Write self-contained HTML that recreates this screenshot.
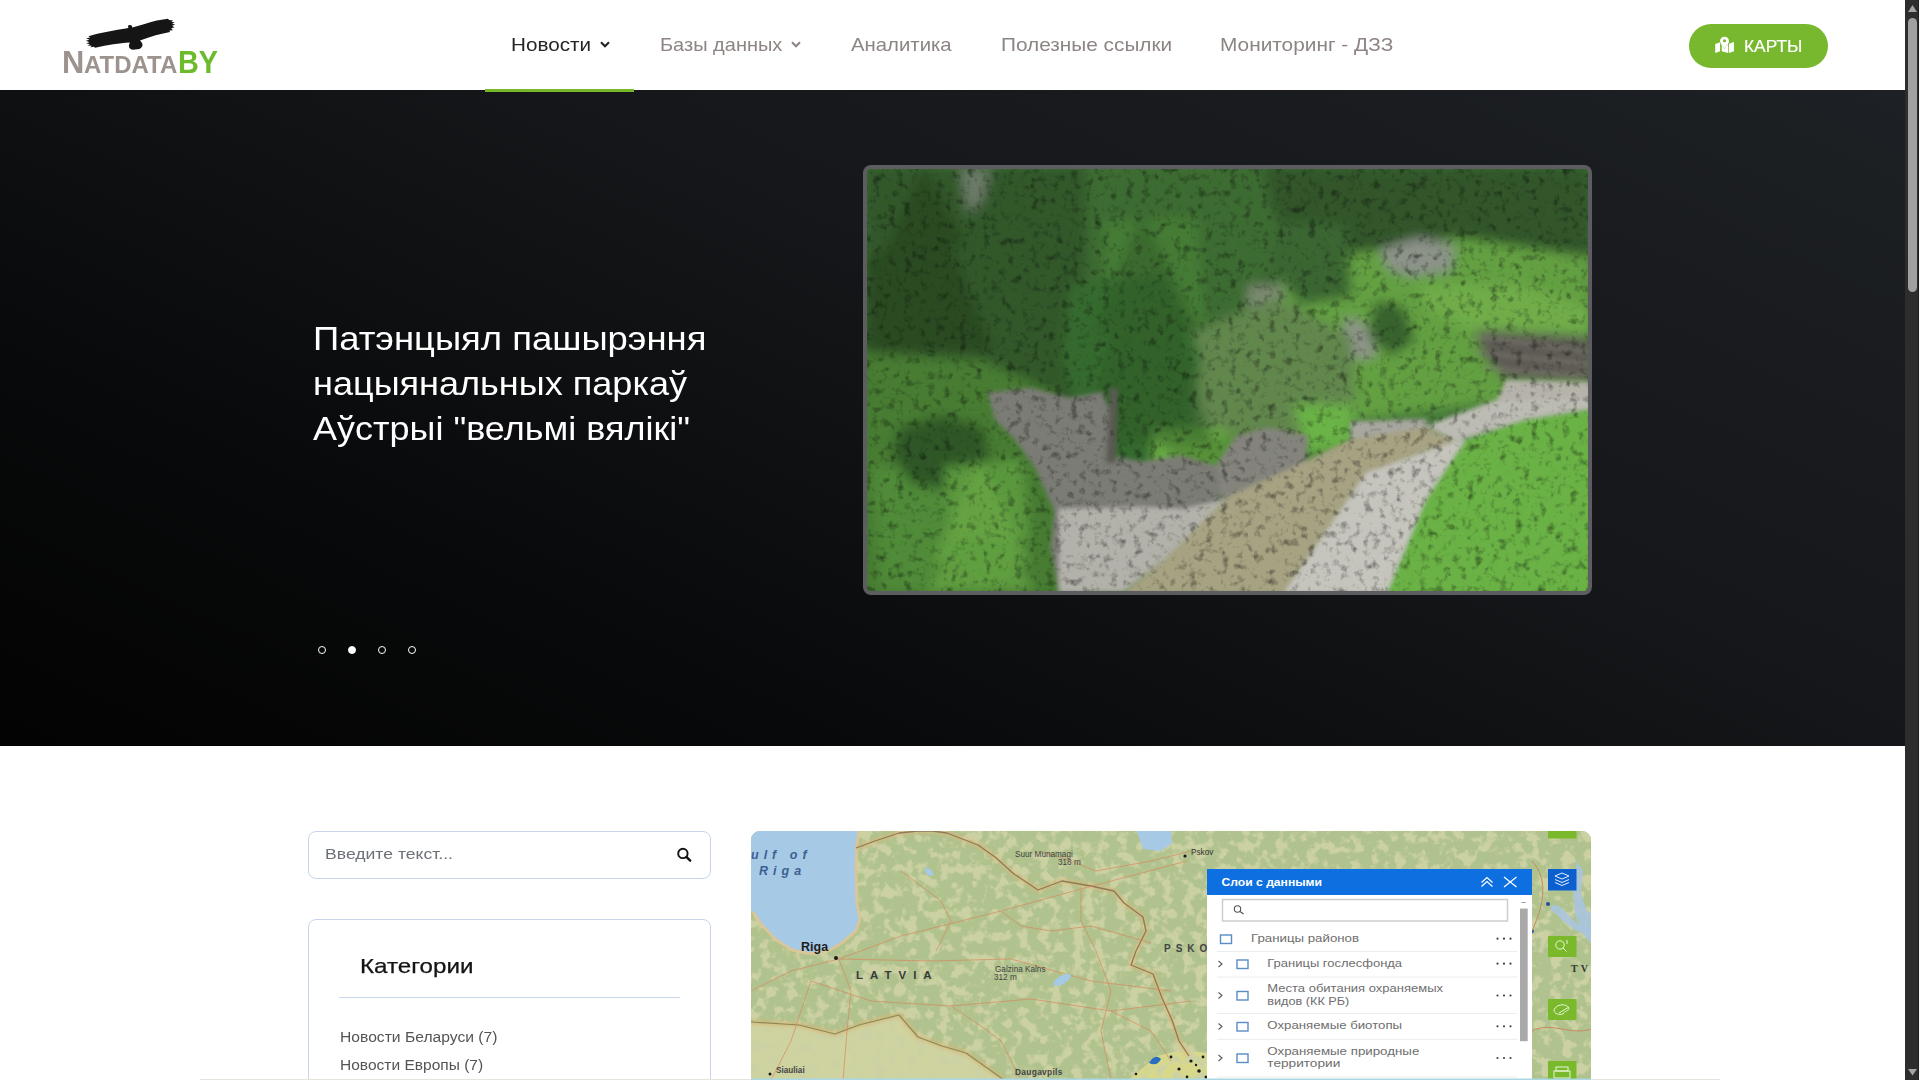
<!DOCTYPE html>
<html><head><meta charset="utf-8">
<style>
*{margin:0;padding:0;box-sizing:border-box}
html,body{width:1920px;height:1080px;overflow:hidden;background:#fff;font-family:"Liberation Sans",sans-serif}
.a{position:absolute}
.t{position:absolute;white-space:nowrap;transform-origin:0 0}
#header{position:absolute;left:0;top:0;width:1905px;height:90px;background:#fff}
.nav{font-size:18.5px;line-height:20px;color:#8d8583}
#hero{position:absolute;left:0;top:90px;width:1905px;height:656px;background:linear-gradient(205deg,#1d2024 0%,#15171a 40%,#08090a 75%,#030303 100%)}
#uline{position:absolute;left:485px;top:89px;width:149px;height:3px;background:#76b82a}
#btn{position:absolute;left:1689px;top:24px;width:139px;height:44px;border-radius:22px;background:#77b82e}
#sb{position:absolute;left:1905px;top:0;width:15px;height:1080px;background:#2d2d2d}
.title{color:#fff;font-size:33.4px;line-height:20px}
.dot{position:absolute;top:645.5px;width:8.5px;height:8.5px;border-radius:50%;border:1.4px solid #fff}
#frame{position:absolute;left:863px;top:165px;width:729px;height:430px;border-radius:8px;background:#5d5d61}
#photo{position:absolute;left:4px;top:4px;width:721px;height:422px;border-radius:4px;overflow:hidden;background:#3d6a2a}
#search{position:absolute;left:308px;top:831px;width:403px;height:48px;border:1px solid #c6d6e8;border-radius:8px}
#cats{position:absolute;left:308px;top:919px;width:403px;height:200px;border:1px solid #c6d6e8;border-radius:8px}
#map{position:absolute;left:751px;top:831px;width:840px;height:249px;border-radius:9px 9px 0 0;overflow:hidden;background:#b6c48e}
</style></head>
<body>
<div id="header">
  <svg class="a" style="left:55px;top:10px" width="170" height="70" viewBox="0 0 1920 791">
    <path fill="#151515" d="M830,200 L822,180 Q845,160 868,178 L872,198 C950,180 1050,140 1150,118 L1275,100 L1290,112 L1335,118 L1312,130 L1352,142 L1322,152 L1357,168 L1322,178 L1348,198 L1312,205 L1332,228 L1292,232 L1300,250 C1200,270 1080,300 960,345 C1000,380 998,422 952,440 L882,448 C838,442 822,410 846,366 C720,376 600,392 452,426 L440,414 L400,422 L414,404 L368,402 L394,388 L352,377 L390,364 L348,347 L390,337 L352,320 L398,310 L378,296 C500,256 680,226 815,205 Z"/>
  </svg>
  <div class="t" id="lgN" style="left:62px;top:45px;font:bold 31.5px/34px 'Liberation Sans',sans-serif;color:#9c928e;transform:scaleX(0.98)">N</div>
  <div class="t" id="lgA" style="left:84px;top:48px;font:bold 24.5px/34px 'Liberation Sans',sans-serif;color:#9c928e;transform:scaleX(0.98)">ATDATA</div>
  <div class="t" id="lgB" style="left:177.5px;top:45px;font:bold 31.5px/34px 'Liberation Sans',sans-serif;color:#6cbb2d;transform:scaleX(0.915)">BY</div>
  <div class="t nav" id="n1" style="left:510.5px;top:35px;transform:scaleX(1.117);color:#252525">Новости</div>
  <svg class="a" style="left:600px;top:41px" width="10" height="7" viewBox="0 0 10 7"><polyline points="1,1.2 5,5.2 9,1.2" fill="none" stroke="#252525" stroke-width="2.1"/></svg>
  <div class="t nav" id="n2" style="left:660px;top:35px;transform:scaleX(1.081)">Базы данных</div>
  <svg class="a" style="left:791px;top:41px" width="10" height="7" viewBox="0 0 10 7"><polyline points="1,1.2 5,5.2 9,1.2" fill="none" stroke="#8d8583" stroke-width="2.1"/></svg>
  <div class="t nav" id="n3" style="left:850.5px;top:35px;transform:scaleX(1.099)">Аналитика</div>
  <div class="t nav" id="n4" style="left:1001px;top:35px;transform:scaleX(1.124)">Полезные ссылки</div>
  <div class="t nav" id="n5" style="left:1220px;top:35px;transform:scaleX(1.126)">Мониторинг - ДЗЗ</div>
  <div id="btn"></div>
  <svg class="a" style="left:1705px;top:30px" width="110" height="32" viewBox="0 0 1920 559">
    <path fill="#fff" d="M178,245 L262,214 L262,372 L178,402 Z M418,240 L505,210 L505,370 L418,402 Z M292,262 L340,330 L388,262 L405,272 L405,402 L292,372 Z"/>
    <path fill="#fff" d="M340,118 C385,118 418,150 418,192 C418,235 370,290 340,322 C310,290 262,235 262,192 C262,150 295,118 340,118 Z"/>
    <circle cx="340" cy="188" r="27" fill="#77b82e"/>
  </svg>
  <div class="t" id="btxt" style="left:1743.5px;top:37.5px;transform:scaleX(1.07);font-size:16.2px;line-height:16px;color:#fff;-webkit-text-stroke:0.2px #fff">КАРТЫ</div>
</div>
<div id="hero"></div>
<div id="uline"></div>
<div class="t title" id="tl1" style="left:313px;top:329px;transform:scaleX(1.091)">Патэнцыял пашырэння</div>
<div class="t title" id="tl2" style="left:313px;top:374px;transform:scaleX(1.080)">нацыянальных паркаў</div>
<div class="t title" id="tl3" style="left:313px;top:419px;transform:scaleX(1.078)">Аўстрыі "вельмі вялікі"</div>
<div class="dot" style="left:317.5px"></div>
<div class="dot" style="left:347.5px;background:#fff"></div>
<div class="dot" style="left:377.5px"></div>
<div class="dot" style="left:407.5px"></div>
<div id="frame"><div id="photo"><svg width="721" height="422" viewBox="7.5 7.5 1818 1065" preserveAspectRatio="none">
<defs>
<filter id="bl" x="-5%" y="-5%" width="110%" height="110%"><feGaussianBlur stdDeviation="14"/></filter>
<filter id="bl2" x="-5%" y="-5%" width="110%" height="110%"><feGaussianBlur stdDeviation="5"/></filter>
<filter id="tex" x="0" y="0" width="100%" height="100%" color-interpolation-filters="sRGB">
<feTurbulence type="fractalNoise" baseFrequency="0.05" numOctaves="4" seed="5" result="n"/>
<feColorMatrix in="n" type="matrix" values="0.33 0.33 0.33 0 0  0.33 0.33 0.33 0 0  0.33 0.33 0.33 0 0  0 0 0 0 1" result="g"/>
<feComponentTransfer in="g" result="m"><feFuncR type="linear" slope="1.9" intercept="0.08"/><feFuncG type="linear" slope="1.9" intercept="0.08"/><feFuncB type="linear" slope="1.9" intercept="0.08"/></feComponentTransfer>
<feBlend in="SourceGraphic" in2="m" mode="multiply"/>
</filter>
<filter id="tex2" x="0" y="0" width="100%" height="100%" color-interpolation-filters="sRGB">
<feTurbulence type="fractalNoise" baseFrequency="0.12" numOctaves="2" seed="9" result="n"/>
<feColorMatrix in="n" type="matrix" values="0.33 0.33 0.33 0 0  0.33 0.33 0.33 0 0  0.33 0.33 0.33 0 0  0 0 0 0 1" result="g"/>
<feComponentTransfer in="g" result="m"><feFuncR type="linear" slope="1.5" intercept="0.25"/><feFuncG type="linear" slope="1.5" intercept="0.25"/><feFuncB type="linear" slope="1.5" intercept="0.25"/></feComponentTransfer>
<feBlend in="SourceGraphic" in2="m" mode="multiply"/>
</filter>
</defs>
<g filter="url(#tex)">
<rect x="0" y="0" width="1833" height="1080" fill="#45783a"/>
<g filter="url(#bl)">
<rect x="0" y="0" width="1833" height="330" fill="#30552a"/>
<path d="M0,0 L560,0 L600,300 L520,600 L300,700 L0,620 Z" fill="#31592a"/>
<path d="M560,0 L1000,0 L1060,200 L960,420 L700,520 L560,420 Z" fill="#3c6c30"/><path d="M600,140 L840,130 L860,400 L620,420 Z" fill="#457c36"/><path d="M240,7 L320,7 L300,90 L260,120 Z" fill="#6a7a66"/>
<path d="M1196,65 L1357,70 L1380,160 L1250,180 L1180,140 Z" fill="#5f9c44"/>
<path d="M1200,260 L1320,240 L1330,340 L1240,380 Z" fill="#6cae48"/>
<path d="M1000,0 L1833,0 L1833,180 L1500,200 L1100,170 Z" fill="#32572a"/>
<path d="M1040,250 L1500,180 L1833,230 L1833,610 L1560,600 L1250,640 L1060,580 Z" fill="#64a042"/>
<path d="M1400,300 L1650,300 L1833,360 L1833,420 L1540,420 L1420,360 Z" fill="#70ad48"/>
<path d="M1040,140 L1216,150 L1230,330 L1100,350 L1030,260 Z" fill="#3b6630"/>
<path d="M1290,340 L1360,355 L1390,440 L1330,480 L1270,430 Z" fill="#38622e"/>
<path d="M1300,210 L1400,180 L1490,200 L1480,265 L1380,280 L1320,260 Z" fill="#8c9388"/>
<path d="M1215,380 L1260,395 L1295,480 L1240,490 L1205,440 Z" fill="#8e9488"/>
<path d="M967,300 L1056,300 L1060,480 L970,470 Z" fill="#7b8a72"/>
<path d="M830,420 L1040,330 L1230,430 L1240,620 L1120,740 L900,760 L830,600 Z" fill="#62874e"/>
<path d="M1543,413 L1833,430 L1833,545 L1620,540 L1560,480 Z" fill="#5f5c55"/>
<path d="M520,300 L760,270 L850,480 L820,700 L700,770 L560,700 L500,480 Z" fill="#366b2d"/>
<path d="M0,470 L300,490 L480,570 L500,1080 L0,1080 Z" fill="#467c33"/>
<path d="M20,760 L300,760 L420,1000 L300,1080 L40,1070 Z" fill="#4f8b38"/>
<path d="M90,660 L200,630 L300,660 L320,760 L260,830 L120,800 L70,730 Z" fill="#2f5628"/><path d="M200,760 L400,740 L420,940 L220,940 Z" fill="#5a983e"/><path d="M727,664 L917,664 L917,790 L727,780 Z" fill="#6aae45"/><path d="M1118,640 L1230,640 L1230,730 L1118,730 Z" fill="#5a9a3e"/>
<path d="M740,690 L980,680 L1000,760 L820,780 Z" fill="#569139"/>
<path d="M1080,600 L1230,600 L1240,700 L1120,720 Z" fill="#6bb347"/>
<path d="M150,0 L260,200 L220,200 L330,470 L0,470 L0,240 L60,200 Z" fill="#233f1c" opacity="0.55"/>
<path d="M290,740 L420,1000 L380,1000 L430,1070 L160,1070 L210,1000 L170,1000 Z" fill="#6aa845" opacity="0.7"/>
<path d="M700,120 L850,420 L800,420 L880,700 L560,700 L620,420 L580,420 Z" fill="#2f5a27" opacity="0.5"/>
</g>
<g filter="url(#bl2)">
<path d="M311,572 L420,560 L520,585 L601,570 L630,650 L610,730 L700,745 L800,730 L903,760 L890,865 L760,900 L650,1000 L560,1080 L491,1080 L470,960 L480,870 L430,760 L380,690 L330,640 Z" fill="#7b7c76"/>
<path d="M890,750 L940,680 L1020,660 L1118,680 L1110,790 L990,830 L900,865 Z" fill="#84847d"/><path d="M1227,645 L1418,638 L1420,700 L1227,715 Z" fill="#a9a8a0"/>
<path d="M491,865 L700,860 L803,865 L916,840 L760,990 L652,1075 L491,1075 Z" fill="#b3b2aa"/>
<path d="M652,1080 L760,990 L916,835 L1060,770 L1227,689 L1418,659 L1493,694 L1267,774 L1057,1080 Z" fill="#a6a282"/>
<path d="M1057,1080 L1267,774 L1493,694 L1669,640 L1833,612 L1833,560 L1594,590 L1418,655 L1493,694 Z" fill="#bdbcb4"/>
<path d="M1057,1080 L1267,774 L1493,694 L1518,690 L1478,750 L1418,840 L1318,1080 Z" fill="#c6c5bd"/>
<path d="M1318,1080 L1418,840 L1478,750 L1518,690 L1669,640 L1833,614 L1833,1080 Z" fill="#6ab244"/>
<path d="M1619,539 L1833,545 L1833,585 L1594,595 Z" fill="#b5b3aa"/><path d="M620,560 L640,560 L635,750 L610,750 Z" fill="#5a5a52"/><path d="M1540,430 L1833,470 M1540,470 L1833,500 M1560,510 L1833,530" stroke="#8a877c" stroke-width="6" fill="none" opacity="0.6"/>
</g>
</g>
</svg></div></div>
<div id="search"></div>
<div class="t" id="ph" style="left:324.5px;top:846px;transform:scaleX(1.143);font-size:15.4px;line-height:16px;color:#6c7177">Введите текст...</div>
<svg class="a" style="left:676px;top:847px" width="17" height="17" viewBox="0 0 17 17"><circle cx="6.9" cy="6.4" r="4.7" fill="none" stroke="#111" stroke-width="1.9"/><line x1="10.4" y1="9.9" x2="14.2" y2="13.6" stroke="#111" stroke-width="2.4" stroke-linecap="round"/></svg>
<div id="cats"></div>
<div class="t" id="cath" style="left:359.5px;top:956px;transform:scaleX(1.222);font-size:19.8px;line-height:20px;color:#141414;-webkit-text-stroke:0.25px #141414">Категории</div>
<div class="a" style="left:339px;top:997px;width:341px;height:1px;background:#c6d6e8"></div>
<div class="t" id="c1" style="left:339.5px;top:1029px;transform:scaleX(1.066);font-size:14.7px;line-height:16px;color:#545454">Новости Беларуси (7)</div>
<div class="t" id="c2" style="left:339.5px;top:1057px;transform:scaleX(1.057);font-size:14.7px;line-height:16px;color:#545454">Новости Европы (7)</div>
<div id="map"><svg width="840" height="249" viewBox="0 0 840 249">
<defs>
<filter id="mtex" x="0" y="0" width="100%" height="100%" color-interpolation-filters="sRGB">
<feTurbulence type="fractalNoise" baseFrequency="0.09" numOctaves="3" seed="11" result="n"/>
<feColorMatrix in="n" type="matrix" values="0 0 0 0 0.80  0 0 0 0 0.82  0 0 0 0 0.64  0 0 0 -6 3.1" result="sp"/>
<feGaussianBlur in="sp" stdDeviation="0.5" result="spb"/>
<feComposite in="spb" in2="SourceGraphic" operator="in" result="sp2"/>
<feMerge><feMergeNode in="SourceGraphic"/><feMergeNode in="sp2"/></feMerge>
</filter>
<filter id="mbl"><feGaussianBlur stdDeviation="1.6"/></filter>
</defs>
<g filter="url(#mtex)">
<rect x="0" y="0" width="840" height="249" fill="#b0c28e"/>
<path d="M0,191 L48,194 L84,203 L108,194 L148,184 L167,206 L191,215 L215,222 L239,239 L253,249 L0,249 Z" fill="#cfd3a0"/>
<path d="M377,249 L406,225 L430,219 L457,222 L457,249 Z" fill="#d8d88a"/>
</g>
<path d="M0,0 L108,0 L106,14 L105,36 L106,72 L109,88 L105,100 L91,112 L79,119 L60,123 L41,119 L24,108 L10,93 L2,81 L0,79 Z" fill="#a6c9e6"/>
<g fill="none" stroke-linejoin="round">
<path d="M108,0 L106,14 L105,36 L106,72 L109,88 L105,100 L91,112 L79,119 L60,123 L41,119 L24,108 L10,93 L2,81" stroke="#e3c68e" stroke-width="3" opacity="0.8"/>
<path d="M105,17 L124,10 L148,2 L167,0 L182,0 L196,2 L227,14 L244,26 L263,43 L287,59 L311,50 L340,55 L363,60 L373,72 L392,86 L395,100 L385,120 L380,134 L402,143 L411,167 L421,189 L428,210 L438,225" stroke="#e0b877" stroke-width="5" opacity="0.6" filter="url(#mbl)"/>
<path d="M105,17 L124,10 L148,2 L167,0 L182,0 L196,2 L227,14 L244,26 L263,43 L287,59 L311,50 L340,55 L363,60 L373,72 L392,86 L395,100 L385,120 L380,134 L402,143 L411,167 L421,189 L428,210 L438,225" stroke="#8d7a5a" stroke-width="1.3"/>
<path d="M0,191 L48,194 L84,203 L108,194 L148,184 L167,206 L191,215 L215,222 L239,239 L253,249" stroke="#d9b777" stroke-width="5" opacity="0.7" filter="url(#mbl)"/>
<path d="M0,191 L48,194 L84,203 L108,194 L148,184 L167,206 L191,215 L215,222 L239,239 L253,249" stroke="#8a8a5a" stroke-width="1.2"/>
<g stroke="#d8875a" stroke-width="0.9" opacity="0.75">
<path d="M88,128 L150,105 L250,80 L330,58 L436,30"/>
<path d="M88,128 L180,130 L260,128 L340,150 L420,160"/>
<path d="M60,150 L120,170 L200,175 L280,168 L360,180 L440,170"/>
<path d="M88,128 L100,160 L96,200 L92,249"/>
<path d="M0,160 L40,140 L88,128"/>
<path d="M150,40 L190,70 L200,90 L185,120"/>
<path d="M250,80 L270,95 L300,100 L340,95 L400,112"/>
<path d="M330,58 L330,90 L345,120 L360,160 L350,200 L360,249"/>
<path d="M200,175 L230,195 L250,210 L270,249"/>
<path d="M20,249 L40,210 L60,150"/>
<path d="M290,20 L320,30 L345,40 L400,30 L440,20"/>
<path d="M360,180 L400,200 L420,230"/>
</g>
</g>
<path d="M386,0 L420,0 L421,12 L410,20 L392,18 Z" fill="#a6c9e6"/>
<ellipse cx="311" cy="149" rx="10" ry="4" fill="#a6c9e6" transform="rotate(-30 311 149)"/>
<ellipse cx="178" cy="41" rx="5" ry="3" fill="#a6c9e6" transform="rotate(40 178 41)"/>
<g fill="#1a1a1a">
<circle cx="85" cy="127" r="2"/><circle cx="434" cy="25" r="1.6"/><circle cx="19" cy="243" r="1.5"/>
<circle cx="405" cy="230" r="2" fill="#2a5fb0"/><path d="M398,232 q6,-10 12,-4 q-4,8 -12,4z" fill="#2a6cc0"/>
<circle cx="420" cy="226" r="1.4"/><circle cx="428" cy="238" r="1.6"/><circle cx="440" cy="230" r="1.6"/><circle cx="448" cy="240" r="1.8"/><circle cx="452" cy="226" r="1.4"/><circle cx="436" cy="246" r="1.4"/><circle cx="385" cy="243" r="1.3"/><circle cx="445" cy="234" r="1.2"/><circle cx="455" cy="246" r="1.5"/>
</g>
<g font-family="Liberation Sans" >
<text x="0" y="28" font-size="12.5" font-style="italic" font-weight="bold" fill="#3e5f91" letter-spacing="5">ulf of</text>
<text x="8" y="44" font-size="12.5" font-style="italic" font-weight="bold" fill="#3e5f91" letter-spacing="5">Riga</text>
<text x="50" y="120" font-size="12.5" font-weight="bold" fill="#1e1e1e">Riga</text>
<text x="105" y="148" font-size="11.5" font-weight="bold" fill="#3a3a3a" letter-spacing="7">LATVIA</text>
<text x="264" y="26" font-size="8.2" fill="#444">Suur Munamagi</text>
<text x="307" y="34" font-size="8.2" fill="#444">318 m</text>
<text x="244" y="141" font-size="8.2" fill="#444">Galzina Kalns</text>
<text x="243" y="149" font-size="8.2" fill="#444">312 m</text>
<text x="264" y="244" font-size="8.4" font-weight="bold" fill="#444" letter-spacing="0.3">Daugavpils</text>
<text x="25" y="242" font-size="8.2" font-weight="bold" fill="#444">Siauliai</text>
<text x="440" y="24" font-size="8.2" fill="#333">Pskov</text>
<text x="413" y="121" font-size="10" font-weight="bold" fill="#444" letter-spacing="5">PSKO</text>
</g>
<!-- right strip beyond panel -->
<g>
<path d="M826,30 L832,40 L830,62 L836,80 L840,82 L840,112 L832,104 L824,84 L822,60 Z" fill="#a8c4e0" opacity="0.85"/><path d="M800,75 C810,70 815,85 830,95 L840,98 L840,104 L826,100 C812,92 806,82 800,80 Z" fill="#a8c4e0" opacity="0.85"/><circle cx="797" cy="73" r="2" fill="#2a4f9a"/><circle cx="781" cy="100" r="2" fill="#2a4f9a"/>
<text x="820" y="141" font-size="10" font-weight="bold" fill="#333" font-family="Liberation Serif" letter-spacing="3">TV</text>
<path d="M781,30 C800,50 790,80 781,100" stroke="#c98a60" stroke-width="1" fill="none"/>
<path d="M781,200 C800,190 820,205 840,198" stroke="#c98a60" stroke-width="1" fill="none"/>
</g>
<!-- panel -->
<rect x="456" y="38" width="325" height="211" fill="#fff"/>
<rect x="456" y="38" width="325" height="26" fill="#0e6fe0"/>
<text x="470.5" y="55.3" font-family="Liberation Sans" font-size="11.6" font-weight="bold" fill="#fff" textLength="100.5" lengthAdjust="spacingAndGlyphs">Слои с данными</text>
<g stroke="#fff" stroke-width="1.2" fill="none">
<polyline points="730.5,51.5 736,46.5 741.5,51.5"/><polyline points="730.5,55.5 736,50.5 741.5,55.5"/>
<line x1="753" y1="46" x2="765.5" y2="56"/><line x1="765.5" y1="46" x2="753" y2="56"/>
</g>
<rect x="471.5" y="68.5" width="285" height="21.5" fill="#fff" stroke="#cdcdcd" stroke-width="1.5"/>
<circle cx="486.5" cy="78" r="3.2" fill="none" stroke="#555" stroke-width="1.1"/><line x1="489" y1="80.5" x2="492.5" y2="83" stroke="#555" stroke-width="1.2"/>
<rect x="769" y="77.6" width="7.7" height="132.6" fill="#a9a9a9"/><rect x="770.5" y="71" width="4" height="1" fill="#999"/>
<g stroke="#ececec" stroke-width="1"><line x1="466" y1="120.5" x2="766" y2="120.5"/><line x1="466" y1="146" x2="766" y2="146"/><line x1="466" y1="182.5" x2="766" y2="182.5"/><line x1="466" y1="208.3" x2="766" y2="208.3"/><line x1="466" y1="246" x2="766" y2="246"/></g>
<g fill="none" stroke="#5a8cc6" stroke-width="1.4">
<rect x="469.5" y="104" width="11" height="8.5"/>
<rect x="486" y="129" width="11" height="8.5"/>
<rect x="486" y="160.5" width="11" height="8.5"/>
<rect x="486" y="191.5" width="11" height="8.5"/>
<rect x="486" y="223" width="11" height="8.5"/>
</g>
<g fill="none" stroke="#5a5a5a" stroke-width="1.1"><polyline points="467.5,130 471,133 467.5,136"/><polyline points="467.5,161.5 471,164.5 467.5,167.5"/><polyline points="467.5,192.5 471,195.5 467.5,198.5"/><polyline points="467.5,224 471,227 467.5,230"/></g>
<g fill="#444"><circle cx="746.5" cy="107.7" r="1.1"/><circle cx="753" cy="107.7" r="1.1"/><circle cx="759.5" cy="107.7" r="1.1"/><circle cx="746.5" cy="132.7" r="1.1"/><circle cx="753" cy="132.7" r="1.1"/><circle cx="759.5" cy="132.7" r="1.1"/><circle cx="746.5" cy="164.5" r="1.1"/><circle cx="753" cy="164.5" r="1.1"/><circle cx="759.5" cy="164.5" r="1.1"/><circle cx="746.5" cy="195.3" r="1.1"/><circle cx="753" cy="195.3" r="1.1"/><circle cx="759.5" cy="195.3" r="1.1"/><circle cx="746.5" cy="227" r="1.1"/><circle cx="753" cy="227" r="1.1"/><circle cx="759.5" cy="227" r="1.1"/></g>
<g font-family="Liberation Sans" font-size="10.6" fill="#6e6e6e" lengthAdjust="spacingAndGlyphs">
<text x="500" y="111" textLength="108" lengthAdjust="spacingAndGlyphs">Границы районов</text>
<text x="516.3" y="135.7" textLength="134.8" lengthAdjust="spacingAndGlyphs">Границы гослесфонда</text>
<text x="516.3" y="160.7" textLength="175.8" lengthAdjust="spacingAndGlyphs">Места обитания охраняемых</text>
<text x="516.3" y="173.9" textLength="82" lengthAdjust="spacingAndGlyphs">видов (КК РБ)</text>
<text x="516.3" y="198.4" textLength="134.8" lengthAdjust="spacingAndGlyphs">Охраняемые биотопы</text>
<text x="516.3" y="223.9" textLength="152" lengthAdjust="spacingAndGlyphs">Охраняемые природные</text>
<text x="516.3" y="236.4" textLength="73" lengthAdjust="spacingAndGlyphs">территории</text>
</g>
<!-- tool buttons -->
<rect x="797" y="-5" width="28.5" height="12.5" fill="#79b92b"/>
<rect x="797" y="38" width="28.5" height="21.5" fill="#0b5fcf"/>
<g stroke="#fff" stroke-width="0.9" fill="none"><path d="M804,45 L811,42 L818,45 L811,48 Z"/><path d="M804,48.5 L811,51.5 L818,48.5"/><path d="M804,51.5 L811,54.5 L818,51.5"/></g>
<rect x="797" y="105" width="28.5" height="21" fill="#79b92b"/>
<g stroke="#e8f5d8" stroke-width="1" fill="none"><circle cx="809" cy="114" r="4.2"/><line x1="812" y1="117" x2="815.5" y2="120.5"/><line x1="815" y1="110" x2="817" y2="110"/><line x1="815" y1="112" x2="817" y2="112"/></g>
<rect x="797" y="168" width="28.5" height="21" fill="#79b92b"/>
<g stroke="#e8f5d8" stroke-width="1" fill="none"><path d="M803,179 C805,173 815,172 818,177 C818,180 813,180 812,183 C808,184 803,183 803,179 Z"/><line x1="808" y1="182" x2="818" y2="176"/></g>
<rect x="797" y="230" width="28.5" height="25" fill="#79b92b"/>
<g stroke="#e8f5d8" stroke-width="1" fill="none"><rect x="805" y="236" width="12" height="4"/><rect x="803" y="240" width="16" height="7"/></g>
<rect x="0" y="247.5" width="840" height="2" fill="#a9d7e6"/>
</svg></div>
<div class="a" style="left:200px;top:1079px;width:551px;height:1px;background:#e6e4dc"></div><div class="a" style="left:1591px;top:1079px;width:129px;height:1px;background:#e6e4dc"></div>
<div id="sb"><svg width="15" height="1080" viewBox="0 0 15 1080" style="position:absolute;left:0;top:0">
<rect x="13" y="0" width="1" height="1080" fill="#1f1f21"/><rect x="14" y="0" width="1" height="1080" fill="#fafafa"/>
<path d="M7.5,5 L12,12 L3,12 Z" fill="#a3a3a3"/>
<rect x="3" y="18" width="9" height="274" rx="4.5" fill="#a0a0a0"/>
<path d="M3,1069 L12,1069 L7.5,1075.5 Z" fill="#a3a3a3"/>
</svg></div>
</body></html>
